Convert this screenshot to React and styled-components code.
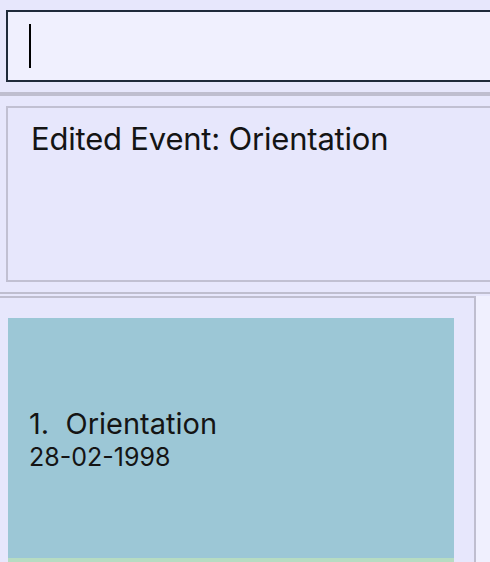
import React from "react";
import styled, { createGlobalStyle } from "styled-components";

const GlobalStyle = createGlobalStyle`
  *, *::before, *::after {
    box-sizing: border-box;
  }
  html, body {
    margin: 0;
    padding: 0;
    background: #e7e7fc;
    overflow: hidden;
  }
  body {
    font-family: Inter, "Noto Sans", sans-serif;
    color: #141414;
  }
`;

const Window = styled.div`
  width: 760px;
  height: 562px;
  display: flex;
  flex-direction: column;
  background: #e7e7fc;
`;

const CommandArea = styled.div`
  padding: 10px 0 10px 6px;
`;

const CommandInput = styled.div`
  height: 72px;
  border: 2px solid #1f2a3a;
  background: #f0f0fe;
  display: flex;
  align-items: center;
  padding-left: 21px;
`;

const Caret = styled.span`
  width: 2px;
  height: 44px;
  background: #000;
`;

const Divider = styled.div`
  height: 4px;
  flex-shrink: 0;
  background: #bfbecf;
`;

const ResultArea = styled.div`
  padding: 10px 0 10px 6px;
`;

const ResultBox = styled.div`
  height: 176px;
  border: 2px solid #c1c0d2;
  padding: 12px 23px;
  font-size: 31px;
  letter-spacing: -0.2px;
`;

const SplitLine = styled.div`
  height: 2px;
  flex-shrink: 0;
  background: #bfbecf;
  margin-bottom: 2px;
`;

const Lower = styled.div`
  flex: 1;
  display: flex;
  min-height: 0;
`;

const ListPanel = styled.div`
  width: 476px;
  border-top: 2px solid #bfbecf;
  border-right: 2px solid #bfbecf;
  padding: 20px 0 0 8px;
  display: flex;
  flex-direction: column;
  overflow: hidden;
`;

const SidePanel = styled.div`
  flex: 1;
  background: #f0f0fe;
`;

const Card = styled.div`
  width: 446px;
  height: ${(p) => p.$height}px;
  flex-shrink: 0;
  background: ${(p) => p.$bg};
  display: flex;
  flex-direction: column;
  justify-content: center;
  padding-left: 21px;
`;

const CardTitle = styled.div`
  font-size: 29px;
  line-height: 37px;
`;

const CardDate = styled.div`
  font-size: 25px;
  line-height: 30px;
`;

const events = [
  { id: 1, name: "Orientation", date: "28-02-1998", bg: "#9cc7d6" },
  { id: 2, name: "", date: "", bg: "#b6dcc2" },
];

export default function App() {
  return (
    <>
      <GlobalStyle />
      <Window>
        <CommandArea>
          <CommandInput>
            <Caret />
          </CommandInput>
        </CommandArea>
        <Divider />
        <ResultArea>
          <ResultBox>Edited Event: Orientation</ResultBox>
        </ResultArea>
        <SplitLine />
        <Lower>
          <ListPanel>
            {events.map((ev) => (
              <Card key={ev.id} $bg={ev.bg} $height={240}>
                {ev.name && (
                  <>
                    <CardTitle>
                      {ev.id}.&nbsp; {ev.name}
                    </CardTitle>
                    <CardDate>{ev.date}</CardDate>
                  </>
                )}
              </Card>
            ))}
          </ListPanel>
          <SidePanel />
        </Lower>
      </Window>
    </>
  );
}
